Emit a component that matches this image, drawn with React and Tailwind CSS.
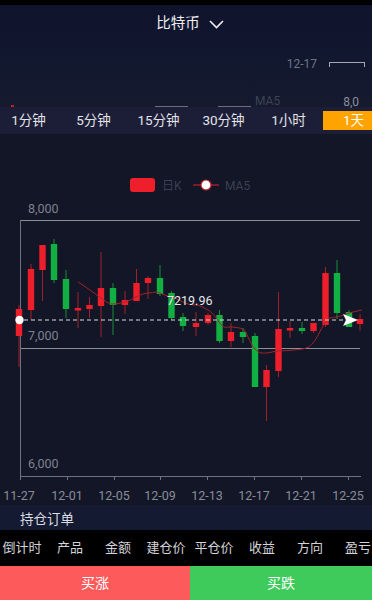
import React from "react";

const tabs = ["1分钟", "5分钟", "15分钟", "30分钟", "1小时", "1天"];
const cols = ["倒计时", "产品", "金额", "建仓价", "平仓价", "收益", "方向", "盈亏"];

// [x, wickTop, bodyTop, bodyBottom, wickBottom, up]
const candles = [
  [19, 305, 309, 336, 367, 1],
  [31, 264, 269, 310, 320, 1],
  [42.5, 245, 245, 270, 301, 1],
  [54, 239, 244, 280, 283, 0],
  [66, 270, 279, 309, 318, 0],
  [78, 292, 308, 310, 328, 1],
  [89.5, 297, 305, 309, 318, 1],
  [101, 252, 288, 306, 337, 1],
  [113, 283, 288, 305, 335, 0],
  [125, 291, 300, 305, 314, 1],
  [136.5, 269, 283, 301, 301, 1],
  [148, 276, 278, 283, 299, 1],
  [160, 265, 278, 294, 296, 0],
  [171.5, 291, 293, 318, 320, 0],
  [183, 313, 317, 326, 331, 0],
  [196, 312, 323, 327, 336, 1],
  [208, 313, 315, 323, 325, 1],
  [219.5, 310, 315, 341, 343, 0],
  [231, 323, 332, 341, 347, 1],
  [243, 328, 332, 337, 343, 0],
  [255, 333, 336, 387, 387, 0],
  [266.5, 365, 370, 387, 421, 1],
  [278.5, 292, 329, 371, 377, 1],
  [290, 321, 328, 330, 338, 1],
  [302, 322, 328, 331, 334, 0],
  [313.5, 323, 323, 331, 333, 1],
  [325.5, 267, 273, 325, 327, 1],
  [337, 260, 273, 313, 319, 0],
  [349, 310, 312, 327, 327, 0],
  [360, 314, 319, 324, 331, 1],
];

const ma =
  "M78 282 C86 287 94 293 101 298 S109 304 113 304 S121 303 125 302 S132 299 136 297 S144 293 148 293 S156 291 160 293 S168 296 171 297 S180 300 183 302 S192 305 196 305 S204 308 208 310 S214 315 219 322 S224 327 230 327 S240 328 243 329 S250 344 255 349 S262 353 266 353 S274 351 278 351 S296 350 302 349 S309 347 313 343 S320 330 325 323 S332 318 337 317 S345 314 349 313 S357 311 362 310";

const xLabels = ["11-27", "12-01", "12-05", "12-09", "12-13", "12-17", "12-21", "12-25"];
const ticks = [20, 67, 114, 160, 207, 254, 301, 348];

function Chart() {
  return (
    <svg width="372" height="371" viewBox="0 134 372 371" className="block">
      <rect x="130" y="178" width="25" height="14" rx="3" fill="#ee1f2b" />
      <text x="162" y="190" fill="#3d4052" fontSize="12" fontFamily="Roboto, 'Noto Sans CJK SC', sans-serif">日K</text>
      <line x1="193" y1="185" x2="219" y2="185" stroke="#b8232b" strokeWidth="1.2" />
      <circle cx="206" cy="185" r="5" fill="#fff" stroke="#b8232b" strokeWidth="1.2" />
      <text x="225" y="190" fill="#3d4052" fontSize="12" fontFamily="Roboto, sans-serif">MA5</text>

      <g fill="#7f8190" fontSize="12.5" fontFamily="Roboto, sans-serif">
        <text x="28" y="213">8,000</text>
        <text x="28" y="340">7,000</text>
        <text x="28" y="468">6,000</text>
      </g>
      <line x1="20" y1="220.5" x2="360" y2="220.5" stroke="#8e8f98" strokeWidth="1" />
      <line x1="20" y1="348.5" x2="360" y2="348.5" stroke="#8e8f98" strokeWidth="1" />
      <line x1="20.5" y1="220" x2="20.5" y2="476" stroke="#6f7180" strokeWidth="1" />
      <line x1="20" y1="476.5" x2="361" y2="476.5" stroke="#6f7180" strokeWidth="1" />
      {ticks.map((t) => (
        <line key={t} x1={t + 0.5} y1="476" x2={t + 0.5} y2="480" stroke="#6f7180" />
      ))}
      <g fill="#8a8c99" fontSize="12.5" fontFamily="Roboto, sans-serif" textAnchor="middle">
        {xLabels.map((l, i) => (
          <text key={l} x={i === 0 ? 19 : ticks[i]} y="500">{l}</text>
        ))}
      </g>

      {candles.map(([x, wt, bt, bb, wb, up], i) => (
        <g key={i}>
          <line x1={x} y1={wt} x2={x} y2={wb} stroke={up ? "#a3202a" : "#178c39"} strokeWidth="1" />
          <rect x={x - 3.2} y={bt} width="6.4" height={Math.max(bb - bt, 2.5)} fill={up ? "#ee1f2b" : "#12b043"} />
        </g>
      ))}
      <path d={ma} fill="none" stroke="#a0242b" strokeWidth="1" />

      <line x1="24" y1="320" x2="350" y2="320" stroke="#d8d8dc" strokeWidth="1.2" strokeDasharray="4 3" />
      <circle cx="19.5" cy="320" r="4.2" fill="#fff" />
      <path d="M343 314 L358 320 L343 326 L346 320 Z" fill="#fff" />
      <text x="167" y="305" fill="#e6e6ea" fontSize="12.5" fontFamily="Roboto, sans-serif">7219.96</text>
    </svg>
  );
}

export default function App() {
  return (
    <div className="w-[372px] h-[600px] overflow-hidden bg-[#121626] font-['Roboto','Noto_Sans_CJK_SC',sans-serif]">
      <div className="h-[5px] bg-black" />
      <div className="h-[102px] bg-gradient-to-b from-[#0f142c] via-[#11172e] to-[#151a2f] flex flex-col">
        <div className="h-[40px] flex items-center justify-center gap-[9px] text-[14.5px] text-[#eeeef2] pl-[8px]">
          <span>比特币</span>
          <svg width="15" height="9" viewBox="0 0 15 9" fill="none">
            <path d="M1 1 L7.5 7.5 L14 1" stroke="#eeeef2" strokeWidth="1.6" />
          </svg>
        </div>
        <div className="flex-1 flex flex-col text-[12px]">
          <div className="flex justify-end items-center gap-[12px] pr-[7px] pt-[12px]">
            <span className="text-[#6f7588]">12-17</span>
            <span className="w-[36px] h-[5px] border-t border-l border-r border-[#a5a8b5]" />
          </div>
          <div className="flex items-end pt-[22px]">
            <span className="ml-[11px] w-[3px] h-[2px] bg-[#c22027]" />
            <span className="ml-[141px] w-[33px] h-[4px] border-b border-[#6a6e80]" />
            <span className="ml-[30px] w-[33px] h-[4px] border-b border-[#6a6e80]" />
            <span className="ml-[4px] text-[#3e4356] leading-none">MA5</span>
            <span className="ml-[63px] text-[#8b8f9e] leading-none -mb-[1px]">8,0</span>
          </div>
        </div>
      </div>
      <div className="h-[27px] bg-[#1c1e37] flex items-center overflow-hidden">
        <div className="flex -ml-[4px] shrink-0">
          {tabs.map((t, i) => (
            <div key={t} className="w-[65px] shrink-0 flex justify-center">
              {i === 5 ? (
                <span className="w-[61px] h-[19px] bg-[#ffa300] text-white text-[13.5px] flex items-center justify-center">{t}</span>
              ) : (
                <span className="h-[19px] text-[#e4e4ea] text-[13.5px] flex items-center">{t}</span>
              )}
            </div>
          ))}
        </div>
      </div>
      <Chart />
      <div className="h-[25px] bg-[#131a31] flex items-end pb-[1px] pl-[20px] text-[13.5px] text-[#dcdce2]">
        持仓订单
      </div>
      <div className="h-[36px] bg-black flex items-center overflow-hidden">
        <div className="flex -ml-[2px] shrink-0">
          {cols.map((c) => (
            <div key={c} className="w-[48px] shrink-0 text-center text-[13px] text-[#d4d4da]">{c}</div>
          ))}
        </div>
      </div>
      <div className="h-[34px] flex text-white text-[14px]">
        <div className="w-[190px] bg-[#fd5b5b] flex items-center justify-center">买涨</div>
        <div className="flex-1 bg-[#3fcb5c] flex items-center justify-center">买跌</div>
      </div>
    </div>
  );
}
